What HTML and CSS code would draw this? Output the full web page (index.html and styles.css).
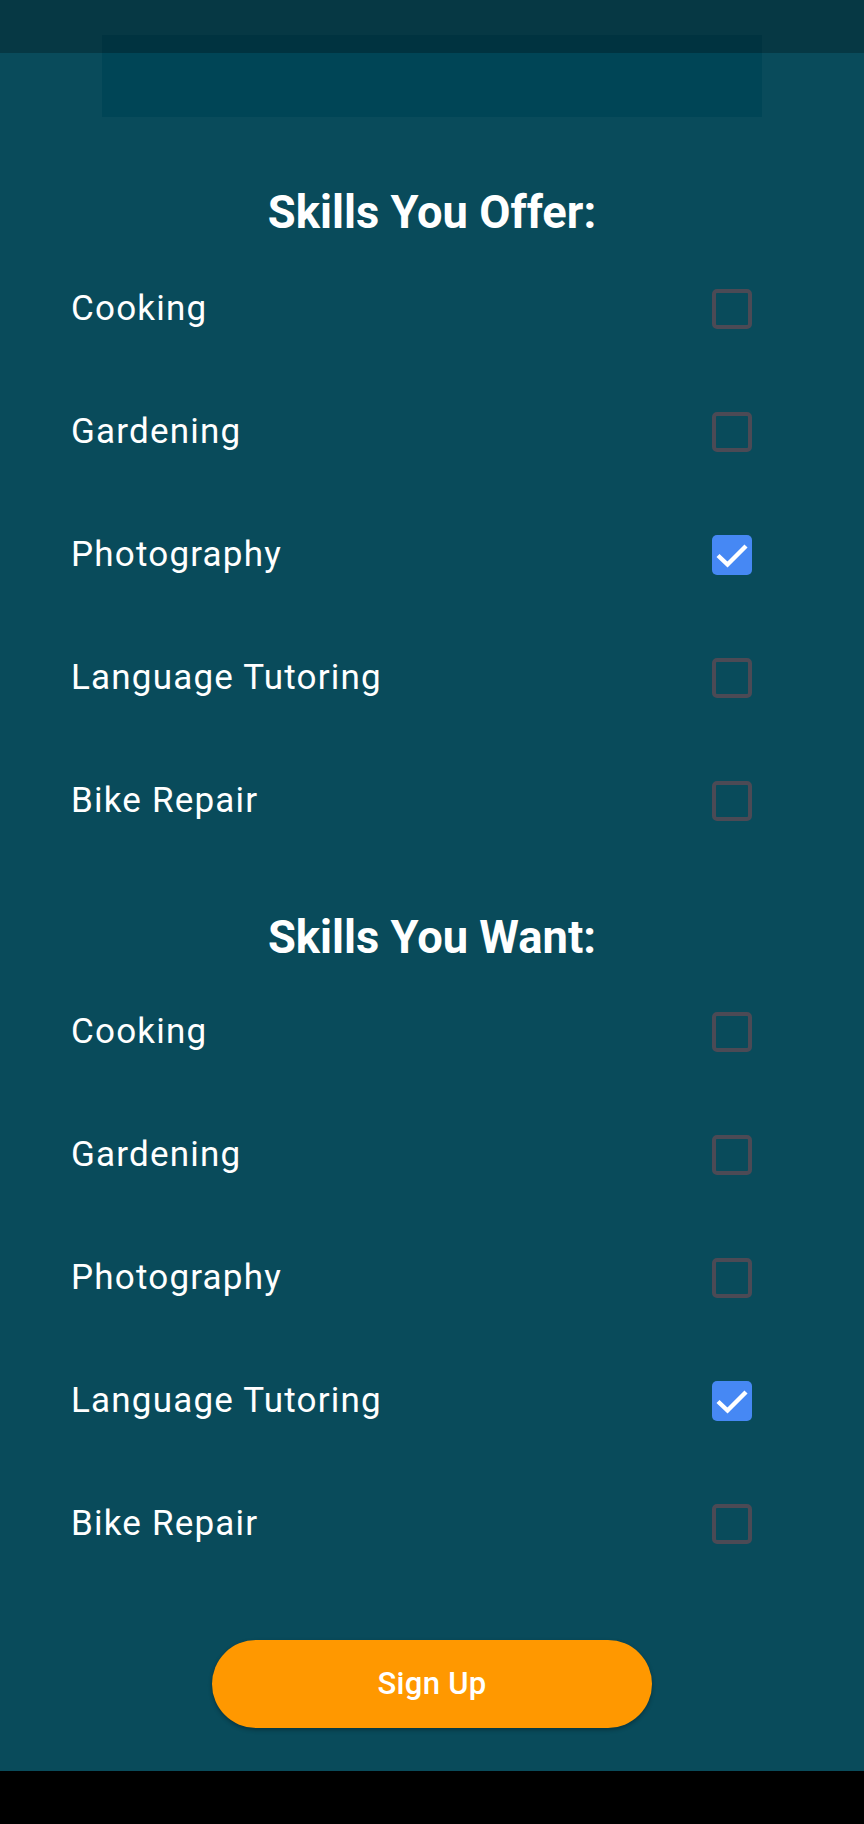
FILE: index.html
```html
<!DOCTYPE html>
<html lang="en">
<head>
<meta charset="utf-8">
<title>Sign Up - Skills</title>
<link rel="stylesheet" href="styles.css">
</head>
<body>
<div class="screen">
  <div class="statusbar"></div>
  <main class="content">
    <div class="banner"></div>

    <section class="skills skills-offer">
      <h2 class="skills-title">Skills You Offer:</h2>
      <ul class="skill-list">
        <li class="skill-row"><span class="skill-label">Cooking</span><span class="check"></span></li>
        <li class="skill-row"><span class="skill-label">Gardening</span><span class="check"></span></li>
        <li class="skill-row"><span class="skill-label">Photography</span><span class="check checked"><svg viewBox="0 0 40 40" class="tick"><polyline points="6,20.5 15.5,29.5 34,11" /></svg></span></li>
        <li class="skill-row"><span class="skill-label">Language Tutoring</span><span class="check"></span></li>
        <li class="skill-row"><span class="skill-label">Bike Repair</span><span class="check"></span></li>
      </ul>
    </section>

    <section class="skills skills-want">
      <h2 class="skills-title">Skills You Want:</h2>
      <ul class="skill-list">
        <li class="skill-row"><span class="skill-label">Cooking</span><span class="check"></span></li>
        <li class="skill-row"><span class="skill-label">Gardening</span><span class="check"></span></li>
        <li class="skill-row"><span class="skill-label">Photography</span><span class="check"></span></li>
        <li class="skill-row"><span class="skill-label">Language Tutoring</span><span class="check checked"><svg viewBox="0 0 40 40" class="tick"><polyline points="6,20.5 15.5,29.5 34,11" /></svg></span></li>
        <li class="skill-row"><span class="skill-label">Bike Repair</span><span class="check"></span></li>
      </ul>
    </section>

    <div class="actions">
      <button class="signup" type="button">Sign Up</button>
    </div>
  </main>
  <div class="navbar"></div>
</div>
</body>
</html>
```

FILE: styles.css
```css
html, body {
  margin: 0;
  padding: 0;
}

body {
  background: #000;
  font-family: Roboto, "Noto Sans", "Liberation Sans", sans-serif;
  color: #fff;
}

.screen {
  position: relative;
  width: 864px;
  height: 1824px;
  display: flex;
  flex-direction: column;
  overflow: hidden;
}

.statusbar {
  position: absolute;
  left: 0;
  top: 0;
  width: 100%;
  height: 53px;
  background: rgba(0, 0, 0, 0.25);
  z-index: 2;
}

.content {
  flex: 1;
  background: #094b5b;
  display: flex;
  flex-direction: column;
  padding-top: 35px;
}

.banner {
  width: 660px;
  height: 82px;
  margin: 0 auto;
  background: #004556;
}

.skills-title {
  margin: 0;
  font-size: 45.3px;
  line-height: 52px;
  font-weight: 700;
  text-align: center;
  letter-spacing: 0;
}

.skills-offer {
  margin-top: 70px;
}

.skills-want {
  margin-top: 49px;
}

.skill-list {
  list-style: none;
  margin: 6px 0 0 0;
  padding: 0;
}

.skills-offer .skill-list {
  margin-top: 8px;
}

.skill-row {
  height: 123.2px;
  display: flex;
  align-items: center;
  justify-content: space-between;
  padding: 0 112px 0 71px;
}

.skill-label {
  font-size: 35px;
  line-height: 40px;
  letter-spacing: 1.2px;
  font-weight: 400;
}

.check {
  width: 40px;
  height: 40px;
  box-sizing: border-box;
  border: 4.4px solid #4b4a55;
  border-radius: 5px;
  display: flex;
  align-items: center;
  justify-content: center;
}

.check.checked {
  border: none;
  background: #4688f4;
}

.tick {
  width: 40px;
  height: 40px;
  display: block;
}

.tick polyline {
  fill: none;
  stroke: #fff;
  stroke-width: 4.4;
  stroke-linecap: butt;
  stroke-linejoin: miter;
}

.actions {
  display: flex;
  justify-content: center;
  margin-top: 54px;
}

.signup {
  width: 440px;
  height: 88px;
  border: none;
  border-radius: 44px;
  background: #ff9800;
  color: #fff;
  font-family: Roboto, "Noto Sans", "Liberation Sans", sans-serif;
  font-size: 31px;
  font-weight: 500;
  letter-spacing: 0.3px;
  box-shadow: 0 2px 4px rgba(0, 0, 0, 0.3);
  padding: 0;
  cursor: pointer;
}

.navbar {
  height: 53px;
  background: #000;
  flex: none;
}
```
